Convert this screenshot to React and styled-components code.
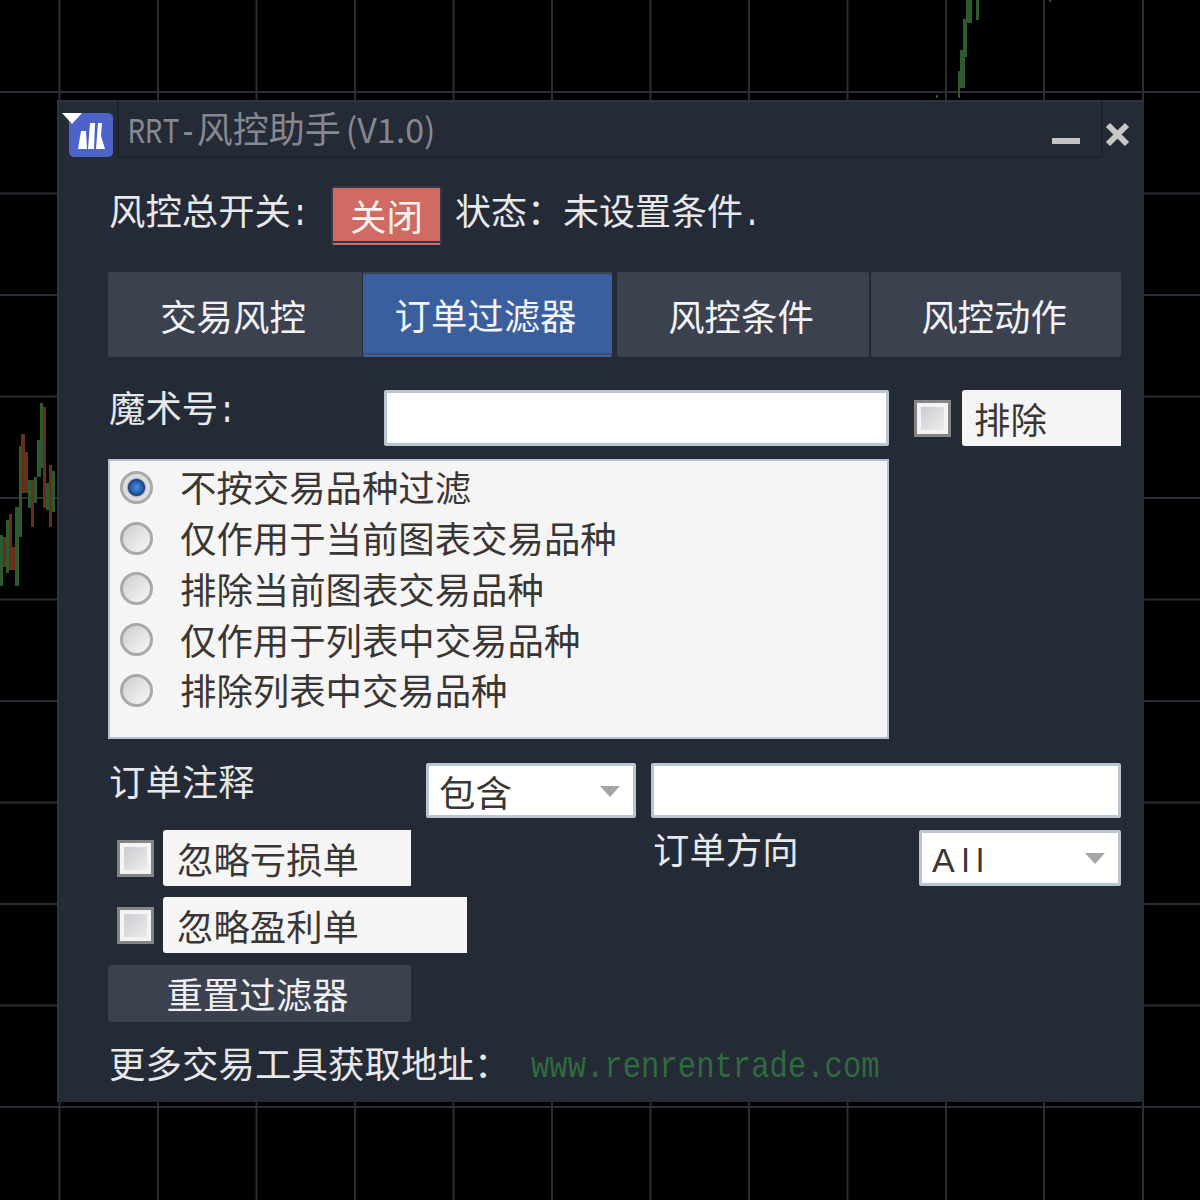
import React from 'react';
import styled, { createGlobalStyle } from 'styled-components';

const GlobalStyle = createGlobalStyle`
    html, body {
        margin: 0;
        padding: 0;
        background: #000;
    }
    body {
        font-family: "Noto Sans CJK SC", "Noto Sans", sans-serif;
        font-size: 36.4px;
        line-height: 1;
    }
`;

const Stage = styled.div`
    position: relative;
    width: 1200px;
    height: 1200px;
    overflow: hidden;
    background: #000;
`;

const ChartSvg = styled.svg`
    position: absolute;
    top: 0;
    left: 0;
`;

const Window = styled.div`
    position: absolute;
    top: 100px;
    left: 57px;
    width: 1087px;
    height: 1002px;
    box-sizing: border-box;
    background: #252a37;
    box-shadow: inset 2px 2px 0 #2e3342;
    display: flex;
    flex-direction: column;
`;

const TitleBar = styled.div`
    height: 58px;
    display: flex;
    align-items: stretch;
    flex: none;
`;

const LogoCell = styled.div`
    width: 60px;
    flex: none;
    border-right: 2px solid #1f232e;
`;

const Caption = styled.div`
    width: 984px;
    flex: none;
    box-sizing: border-box;
    border-right: 2px solid #1f232e;
    border-bottom: 2px solid #1f232e;
    padding-left: 9px;
    display: flex;
    justify-content: space-between;
    color: #85888f;
    font-size: 36px;
`;

const CaptionText = styled.div`
    padding-top: 9px;
    white-space: nowrap;
`;

const Version = styled.span`
    font-size: 34px;
    margin-left: 5px;
`;

const CloseCell = styled.div`
    flex: 1;
`;

const Body = styled.div`
    flex: 1;
    display: flex;
    flex-direction: column;
    padding: 0 23px 0 51px;
`;

const Half = styled.span`
    display: inline-block;
    width: ${(p) => p.$n * p.$cell}px;
    font-family: "Liberation Mono", monospace;
    white-space: nowrap;
    transform: scaleX(${(p) => p.$cell / 21.6});
    transform-origin: left center;
`;

const Row = styled.div`
    display: flex;
    align-items: center;
    height: ${(p) => p.$h}px;
    margin-top: ${(p) => p.$mt}px;
    flex: none;
`;

const Label = styled.div`
    color: #e6e8ea;
    padding-left: 1px;
    padding-bottom: ${(p) => p.$pb || 16}px;
    box-sizing: border-box;
    width: ${(p) => (p.$w ? `${p.$w}px` : 'auto')};
    flex: none;
    white-space: nowrap;
`;

const Toggle = styled.div`
    width: 107px;
    height: 57px;
    box-sizing: border-box;
    margin-left: 43px;
    margin-right: 15px;
    background: #cf6b62;
    color: #fbf3f0;
    border-bottom: 2px solid #cf6b62;
    box-shadow: inset 0 -2px 0 #333a4a, 0 -2px 0 #333a4a, 2px 0 0 #333a4a, -2px 0 0 #333a4a;
    display: flex;
    align-items: center;
    justify-content: center;
    flex: none;
`;

const Status = styled.div`
    color: #e6e8ea;
    font-size: 36px;
    padding-bottom: 8px;
    white-space: nowrap;
`;

const Tabs = styled.div`
    display: flex;
    height: 85px;
    margin-top: 27px;
    flex: none;
`;

const Tab = styled.div`
    width: ${(p) => p.$w}px;
    margin-right: ${(p) => p.$mr || 0}px;
    flex: none;
    background: ${(p) => (p.$active ? '#3a5e9e' : '#3c4150')};
    color: #f1f3f5;
    display: flex;
    align-items: center;
    justify-content: center;
    border-radius: 2px;
    box-sizing: border-box;
    padding: 1px 4px 0 0;
    border-bottom: ${(p) => (p.$active ? '2px solid #3c62a8' : 'none')};
    box-shadow: ${(p) => (p.$active ? 'inset 0 2px 0 #3c4150, inset 0 -2px 0 #444d66' : 'none')};
`;

const TextInput = styled.div`
    width: ${(p) => p.$w}px;
    height: ${(p) => p.$h || 55}px;
    flex: none;
    box-sizing: border-box;
    background: #fff;
    border: 3px solid #b9c6d2;
    border-radius: 2px;
`;

const Select = styled(TextInput)`
    display: flex;
    align-items: center;
    justify-content: space-between;
    padding: 1px 13px 0 10px;
    color: #3a3633;
    margin-right: ${(p) => p.$mr || 0}px;
`;

const Arrow = styled.div`
    width: 0;
    height: 0;
    border-left: 10px solid transparent;
    border-right: 10px solid transparent;
    border-top: 11px solid #a5a5a5;
    flex: none;
`;

const AllText = styled.span`
    font-family: "Liberation Sans", sans-serif;
    font-size: 34px;
    letter-spacing: 7px;
    padding-top: 2px;
`;

const CheckBox = styled.div`
    width: 37px;
    height: 37px;
    flex: none;
    box-sizing: border-box;
    border: 3px solid #858585;
    box-shadow: inset 0 0 0 4px #f4f4f4;
    background: linear-gradient(135deg, #c4c6ca, #f2f2f2);
    margin-left: ${(p) => p.$ml || 0}px;
`;

const CheckLabel = styled.div`
    width: ${(p) => p.$w}px;
    height: 56px;
    flex: none;
    box-sizing: border-box;
    background: #f5f5f5;
    color: #3a3633;
    margin-left: ${(p) => p.$ml || 9}px;
    padding: 1px 0 0 ${(p) => p.$pl || 14}px;
    display: flex;
    align-items: center;
    border-radius: 3px 0 0 3px;
`;

const RadioPanel = styled.div`
    width: 781px;
    height: 280px;
    margin-top: 13px;
    flex: none;
    box-sizing: border-box;
    background: #f5f5f5;
    border: 2px solid #b4c2cf;
    padding: 1px 0 0 10px;
    display: flex;
    flex-direction: column;
`;

const RadioRow = styled.div`
    display: flex;
    align-items: center;
    height: 50.8px;
    color: #3a3633;
    flex: none;
`;

const RadioText = styled.span`
    padding-bottom: 2px;
`;

const RadioMark = styled.div`
    width: 33px;
    height: 33px;
    flex: none;
    box-sizing: border-box;
    border-radius: 50%;
    border: 3px solid #a9a9a9;
    background: ${(p) =>
        p.$on
            ? 'radial-gradient(circle at 50% 50%, #4b8be0 0, #2a66b8 5px, #1f3f78 8px, #d8d8d8 9.5px, #f2f2f2 100%)'
            : 'linear-gradient(135deg, #cfcfcf, #f7f7f7)'};
    margin-right: 27px;
`;

const Lower = styled.div`
    display: flex;
    margin-top: 12px;
    flex: none;
`;

const LowerLeft = styled.div`
    width: 544px;
    flex: none;
    display: flex;
    flex-direction: column;
    gap: 11px;
`;

const CheckRow = styled.div`
    display: flex;
    align-items: center;
    height: 56px;
    padding-left: 9px;
`;

const LowerRight = styled.div`
    flex: 1;
    display: flex;
    align-items: center;
    height: 56px;
`;

const ResetButton = styled.div`
    width: 303px;
    height: 57px;
    margin-top: 1px;
    background: #3c4150;
    color: #eef0f2;
    border-radius: 3px;
    display: flex;
    align-items: center;
    justify-content: center;
    padding-right: 4px;
    box-sizing: border-box;
`;

const Footer = styled.div`
    display: flex;
    align-items: center;
    margin-top: 21px;
    height: 38px;
    padding-left: 1px;
    color: #e6e8ea;
    letter-spacing: 0.1px;
    white-space: nowrap;
    flex: none;
`;

const FooterLink = styled.div`
    margin-left: 21px;
    padding-top: 6px;
    color: #2f6b3e;
    letter-spacing: 0;
`;

const grid = {
    xs: [59.5, 158, 256.5, 355, 453.5, 552, 650.5, 749, 847.5, 946, 1044, 1143],
    ys: [92, 193.5, 295, 396.5, 498, 599.5, 701, 802.5, 904, 1005.5, 1107],
};

// x, width, top, bottom
const greenBars = [
    [0, 3, 535, 586], [6, 3, 520, 573], [15, 4, 507, 586], [19, 3, 446, 537],
    [28, 3, 480, 508], [34, 3, 477, 503], [37, 4, 440, 477], [40, 3, 403, 468],
    [46, 3, 483, 510], [52, 3, 471, 512],
    [958, 2, 71, 98], [960, 5, 50, 88], [963, 4, 19, 57], [966, 6, 0, 23], [976, 3, 0, 20],
    [936, 2, 95, 98],
];

const redBars = [
    [3, 3, 537, 567], [9, 3, 514, 570], [12, 3, 547, 570], [21, 4, 434, 493],
    [25, 3, 452, 493], [31, 3, 480, 527], [43, 3, 407, 508], [49, 3, 465, 527],
    [1049, 2, 0, 2],
];

const Chart = () => (
    <ChartSvg width="1200" height="1200" viewBox="0 0 1200 1200">
        {grid.xs.map((x) => (
            <line key={x} x1={x} y1="0" x2={x} y2="1200" stroke="#2a2d35" strokeWidth="2" />
        ))}
        {grid.ys.map((y) => (
            <line key={y} x1="0" y1={y} x2="1200" y2={y} stroke="#2a2d35" strokeWidth="2" />
        ))}
        {greenBars.map(([x, w, t, b]) => (
            <rect key={`g${x}${t}`} x={x} y={t} width={w} height={b - t} fill="#2a5a2e" />
        ))}
        {redBars.map(([x, w, t, b]) => (
            <rect key={`r${x}${t}`} x={x} y={t} width={w} height={b - t} fill="#6a2f1a" />
        ))}
    </ChartSvg>
);

const Logo = () => (
    <svg width="60" height="58" viewBox="0 0 60 58" style={{ display: 'block' }}>
        <rect x="12" y="13" width="44" height="44" rx="5" fill="#4d63c9" />
        <path d="M5 13H25L15 24Z" fill="#fff" />
        <path
            d="M21 49L24 31H29L30 49ZM31 49L33 23H38L37 49ZM39 49L41 23H45L44 36L48 49Z"
            fill="#fff"
        />
    </svg>
);

const WindowButtons = () => (
    <svg width="80" height="58" viewBox="0 0 80 58" style={{ display: 'block' }}>
        <rect x="31" y="38" width="28" height="6" fill="#c4c4c4" />
    </svg>
);

const CloseIcon = () => (
    <svg width="43" height="58" viewBox="0 0 43 58" style={{ display: 'block' }}>
        <path d="M5 25L24 44M24 25L5 44" stroke="#c8c8c8" strokeWidth="6" />
    </svg>
);

const radios = [
    '不按交易品种过滤',
    '仅作用于当前图表交易品种',
    '排除当前图表交易品种',
    '仅作用于列表中交易品种',
    '排除列表中交易品种',
];

const tabs = [
    { text: '交易风控', w: 254, mr: 1 },
    { text: '订单过滤器', w: 249, mr: 5, active: true },
    { text: '风控条件', w: 252, mr: 2 },
    { text: '风控动作', w: 250 },
];

const App = () => (
    <Stage>
        <GlobalStyle />
        <Chart />
        <Window>
            <TitleBar>
                <LogoCell>
                    <Logo />
                </LogoCell>
                <Caption>
                    <CaptionText>
                        <Half $n={4} $cell={17.2}>RRT-</Half>风控助手<Version>(V1.0)</Version>
                    </CaptionText>
                    <WindowButtons />
                </Caption>
                <CloseCell>
                    <CloseIcon />
                </CloseCell>
            </TitleBar>
            <Body>
                <Row $h={57} $mt={30}>
                    <Label $w={182} $pb={8}>
                        风控总开关<Half $n={1} $cell={18}>:</Half>
                    </Label>
                    <Toggle>关闭</Toggle>
                    <Status>
                        状态：未设置条件<Half $n={1} $cell={18}>.</Half>
                    </Status>
                </Row>
                <Tabs>
                    {tabs.map((t) => (
                        <Tab key={t.text} $w={t.w} $mr={t.mr} $active={t.active}>
                            {t.text}
                        </Tab>
                    ))}
                </Tabs>
                <Row $h={56} $mt={33}>
                    <Label $w={276}>
                        魔术号<Half $n={1} $cell={18}>:</Half>
                    </Label>
                    <TextInput $w={505} $h={56} />
                    <CheckBox $ml={25} />
                    <CheckLabel $w={159} $ml={11} $pl={12}>排除</CheckLabel>
                </Row>
                <RadioPanel>
                    {radios.map((text, i) => (
                        <RadioRow key={text}>
                            <RadioMark $on={i === 0} />
                            <RadioText>{text}</RadioText>
                        </RadioRow>
                    ))}
                </RadioPanel>
                <Row $h={55} $mt={24}>
                    <Label $w={318} $pb={20}>订单注释</Label>
                    <Select $w={210} $mr={15}>
                        包含
                        <Arrow />
                    </Select>
                    <TextInput $w={470} />
                </Row>
                <Lower>
                    <LowerLeft>
                        <CheckRow>
                            <CheckBox />
                            <CheckLabel $w={248}>忽略亏损单</CheckLabel>
                        </CheckRow>
                        <CheckRow>
                            <CheckBox />
                            <CheckLabel $w={304}>忽略盈利单</CheckLabel>
                        </CheckRow>
                        <ResetButton>重置过滤器</ResetButton>
                    </LowerLeft>
                    <LowerRight>
                        <Label $w={267} $pb={20}>订单方向</Label>
                        <Select $w={202} $h={56}>
                            <AllText>All</AllText>
                            <Arrow />
                        </Select>
                    </LowerRight>
                </Lower>
                <Footer>
                    更多交易工具获取地址：
                    <FooterLink>
                        <Half $n={19} $cell={18.15}>www.renrentrade.com</Half>
                    </FooterLink>
                </Footer>
            </Body>
        </Window>
    </Stage>
);

export default App;
